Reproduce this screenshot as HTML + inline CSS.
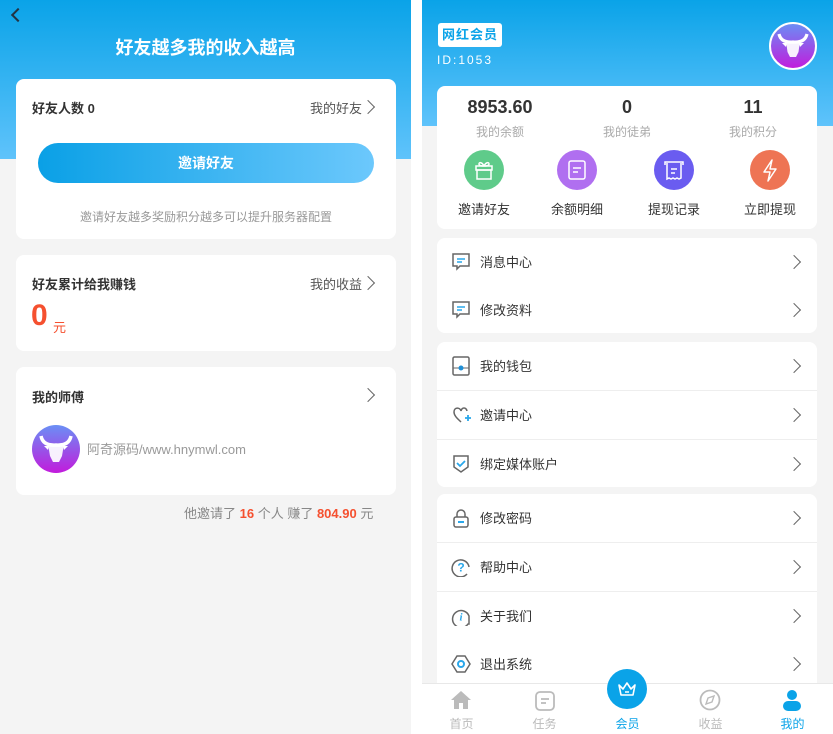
<!DOCTYPE html>
<html><head><meta charset="utf-8"><style>
*{margin:0;padding:0;box-sizing:border-box}
body{width:833px;height:734px;position:relative;background:#fff;font-family:"Liberation Sans","Noto Sans CJK SC",sans-serif;overflow:hidden;color:#333}
.a{position:absolute}
.card{position:absolute;background:#fff;border-radius:8px}
.chev{position:absolute;width:10px;height:10px;border-right:1.6px solid #666;border-top:1.6px solid #666;transform:rotate(45deg)}
.row{position:absolute;left:0;right:0;height:49px}
.row .t{position:absolute;left:43px;top:0;line-height:49px;font-size:13px;color:#333}
.row .ic{position:absolute;left:14px;top:14px}
.row .chev{right:18px;top:19px}
.sep{border-top:1px solid #eee}
.nav{position:absolute;top:683px;width:83px;text-align:center;font-size:12px;color:#bbb}
</style></head><body>
<!-- LEFT -->
<div class="a" style="left:0;top:0;width:411px;height:734px;background:#f4f4f4"></div>
<div class="a" style="left:0;top:0;width:411px;height:159px;background:linear-gradient(#0aa3e8,#5fc3fb)"></div>
<div class="a" style="left:13px;top:10px;width:10px;height:10px;border-left:2px solid #234;border-bottom:2px solid #234;transform:rotate(45deg)"></div>
<div class="a" style="left:0;width:411px;top:34px;text-align:center;color:#fff;font-size:18px;font-weight:bold">好友越多我的收入越高</div>
<div class="card" style="left:16px;top:79px;width:380px;height:160px">
 <div class="a" style="left:16px;top:19px;font-size:13px;font-weight:bold">好友人数 0</div>
 <div class="a" style="right:34px;top:19px;font-size:13px;color:#555">我的好友</div>
 <div class="chev" style="right:23px;top:23px"></div>
 <div class="a" style="left:22px;top:64px;width:336px;height:40px;border-radius:20px;background:linear-gradient(90deg,#0aa0e6,#6cc8fc);color:#fff;font-size:14px;font-weight:bold;text-align:center;line-height:40px">邀请好友</div>
 <div class="a" style="left:0;width:380px;top:129px;text-align:center;font-size:12px;color:#999">邀请好友越多奖励积分越多可以提升服务器配置</div>
</div>
<div class="card" style="left:16px;top:255px;width:380px;height:96px">
 <div class="a" style="left:16px;top:19px;font-size:13px;font-weight:bold">好友累计给我赚钱</div>
 <div class="a" style="right:34px;top:19px;font-size:13px;color:#555">我的收益</div>
 <div class="chev" style="right:23px;top:23px"></div>
 <div class="a" style="left:15px;top:44px;font-size:30px;font-weight:bold;color:#f5502f">0</div>
 <div class="a" style="left:37px;top:62px;font-size:13px;color:#f5502f">元</div>
</div>
<div class="card" style="left:16px;top:367px;width:380px;height:128px">
 <div class="a" style="left:16px;top:20px;font-size:13px;font-weight:bold">我的师傅</div>
 <div class="chev" style="right:23px;top:23px"></div>
 <svg class="a" style="left:16px;top:58px" width="48" height="48" viewBox="0 0 48 48"><defs><linearGradient id="g1" x1="0" y1="0" x2="0" y2="1"><stop offset="0" stop-color="#6a8ff5"/><stop offset="1" stop-color="#c21bdc"/></linearGradient></defs><circle cx="24" cy="24" r="24" fill="url(#g1)"/><path d="M9 11Q11 21 24 20Q37 21 39 11" fill="none" stroke="#fff" stroke-width="3.5"/><path d="M16 19L32 19L30 31L27 37H21L18 31Z" fill="#fff" opacity=".92"/><path d="M12 21l5 0-1 4zM36 21l-5 0 1 4z" fill="#fff"/></svg>
 <div class="a" style="left:71px;top:72px;font-size:13px;color:#999">阿奇源码/www.hnymwl.com</div>
</div>
<div class="a" style="left:184px;top:503px;font-size:13px;color:#888">他邀请了 <b style="color:#f5502f">16</b> 个人 赚了 <b style="color:#f5502f">804.90</b> 元</div>

<!-- RIGHT -->
<div class="a" style="left:422px;top:0;width:411px;height:734px;background:#f4f4f4"></div>
<div class="a" style="left:422px;top:0;width:411px;height:126px;background:linear-gradient(#0aa3e8,#5fc3fb)"></div>
<div class="a" style="left:438px;top:23px;width:64px;height:24px;background:#fff;border-radius:3px;color:#0aa3e8;font-size:13px;font-weight:bold;text-align:center;line-height:24px;letter-spacing:1px">网红会员</div>
<div class="a" style="left:437px;top:53px;color:#fff;font-size:12px;letter-spacing:2px">ID:1053</div>
<svg class="a" style="left:769px;top:22px" width="48" height="48" viewBox="0 0 48 48"><defs><linearGradient id="g2" x1="0" y1="0" x2="0" y2="1"><stop offset="0" stop-color="#6a8ff5"/><stop offset="1" stop-color="#c21bdc"/></linearGradient></defs><circle cx="24" cy="24" r="23" fill="url(#g2)" stroke="#fff" stroke-width="2"/><path d="M10 12Q12 21 24 20Q36 21 38 12" fill="none" stroke="#fff" stroke-width="3.2"/><path d="M17 19L31 19L29.5 30L27 35H21L18.5 30Z" fill="#fff" opacity=".92"/><path d="M13 21l5 0-1 4zM35 21l-5 0 1 4z" fill="#fff"/></svg>
<div class="card" style="left:437px;top:86px;width:380px;height:143px">
 <div class="a" style="left:13px;width:100px;top:11px;text-align:center;font-size:18px;font-weight:bold">8953.60</div>
 <div class="a" style="left:13px;width:100px;top:37px;text-align:center;font-size:12px;color:#aaa">我的余额</div>
 <div class="a" style="left:140px;width:100px;top:11px;text-align:center;font-size:18px;font-weight:bold">0</div>
 <div class="a" style="left:140px;width:100px;top:37px;text-align:center;font-size:12px;color:#aaa">我的徒弟</div>
 <div class="a" style="left:266px;width:100px;top:11px;text-align:center;font-size:18px;font-weight:bold">11</div>
 <div class="a" style="left:266px;width:100px;top:37px;text-align:center;font-size:12px;color:#aaa">我的积分</div>
 <svg class="a" style="left:27px;top:64px" width="40" height="40"><circle cx="20" cy="20" r="20" fill="#5fcb8a"/><g fill="none" stroke="#fff" stroke-width="1.5"><rect x="12" y="16" width="16" height="4"/><rect x="13" y="20" width="14" height="9"/><path d="M20 16c-2-4-5-4-5-2s3 2 5 2c2 0 5 0 5-2s-3-2-5 2"/></g></svg>
 <div class="a" style="left:7px;width:80px;top:113px;text-align:center;font-size:13px">邀请好友</div>
 <svg class="a" style="left:120px;top:64px" width="40" height="40"><circle cx="20" cy="20" r="20" fill="#b06ff0"/><g fill="none" stroke="#fff" stroke-width="1.5"><rect x="12" y="11" width="16" height="18" rx="2"/><path d="M16 18h8M16 22h5"/></g></svg>
 <div class="a" style="left:100px;width:80px;top:113px;text-align:center;font-size:13px">余额明细</div>
 <svg class="a" style="left:217px;top:64px" width="40" height="40"><circle cx="20" cy="20" r="20" fill="#6a5cf0"/><g fill="none" stroke="#fff" stroke-width="1.5"><path d="M11 15v-3h18v3M13 13v16l2-1 2 1 2-1 2 1 2-1 2 1 2-1V13"/><path d="M17 19h6M17 23h4"/></g></svg>
 <div class="a" style="left:197px;width:80px;top:113px;text-align:center;font-size:13px">提现记录</div>
 <svg class="a" style="left:313px;top:64px" width="40" height="40"><circle cx="20" cy="20" r="20" fill="#ee7454"/><path d="M22 10l-8 12h6l-2 9 8-12h-6z" fill="none" stroke="#fff" stroke-width="1.5" stroke-linejoin="round"/></svg>
 <div class="a" style="left:293px;width:80px;top:113px;text-align:center;font-size:13px">立即提现</div>
</div>
<div class="card" style="left:437px;top:238px;width:380px;height:95px">
 <div class="row" style="top:0"><svg class="ic" width="20" height="20"><path d="M2 2h16v12H9l-3 3v-3H2z" fill="none" stroke="#666" stroke-width="1.5"/><path d="M6 7h8M6 10h5" stroke="#2aa7ea" stroke-width="1.5"/></svg><span class="t">消息中心</span><i class="chev"></i></div>
 <div class="row" style="top:48px"><svg class="ic" width="20" height="20"><path d="M2 2h16v12H9l-3 3v-3H2z" fill="none" stroke="#666" stroke-width="1.5"/><path d="M6 7h8M6 10h5" stroke="#2aa7ea" stroke-width="1.5"/></svg><span class="t">修改资料</span><i class="chev"></i></div>
</div>
<div class="card" style="left:437px;top:342px;width:380px;height:145px">
 <div class="row" style="top:0"><svg class="ic" width="20" height="20"><rect x="2" y="1" width="16" height="18" rx="1.5" fill="none" stroke="#666" stroke-width="1.5"/><path d="M2 12h16" stroke="#666"/><circle cx="10" cy="12" r="2.5" fill="#1f8fd6"/></svg><span class="t">我的钱包</span><i class="chev"></i></div>
 <div class="row sep" style="top:48px"><svg class="ic" width="20" height="20"><path d="M16 6c-1-4-5-4-6 0c-1-4-7-4-7 1c0 4 4 7 7 10" fill="none" stroke="#666" stroke-width="1.5"/><path d="M14 13h6M17 10v6" stroke="#2aa7ea" stroke-width="1.8"/></svg><span class="t">邀请中心</span><i class="chev"></i></div>
 <div class="row sep" style="top:97px"><svg class="ic" width="20" height="20"><path d="M3 2h14v11l-7 5-7-5z" fill="none" stroke="#666" stroke-width="1.5"/><path d="M6 9l3 3 5-5" fill="none" stroke="#2aa7ea" stroke-width="1.8"/></svg><span class="t">绑定媒体账户</span><i class="chev"></i></div>
</div>
<div class="card" style="left:437px;top:494px;width:380px;height:200px">
 <div class="row" style="top:0"><svg class="ic" width="20" height="20"><path d="M6 9V6a4 4 0 018 0v3" fill="none" stroke="#666" stroke-width="1.5"/><rect x="3" y="9" width="14" height="10" rx="2" fill="none" stroke="#666" stroke-width="1.5"/><path d="M7 14h6" stroke="#2aa7ea" stroke-width="2"/></svg><span class="t">修改密码</span><i class="chev"></i></div>
 <div class="row sep" style="top:48px"><svg class="ic" width="20" height="20"><path d="M16 17A8.5 8.5 0 1118 10" fill="none" stroke="#666" stroke-width="1.5"/><text x="10" y="14.5" font-size="12" font-weight="bold" fill="#2aa7ea" text-anchor="middle" font-family="Liberation Sans">?</text></svg><span class="t">帮助中心</span><i class="chev"></i></div>
 <div class="row sep" style="top:97px"><svg class="ic" width="20" height="20"><path d="M17 18A8.5 8.5 0 1118 10v8z" fill="none" stroke="#666" stroke-width="1.5"/><text x="10" y="14.5" font-size="11" font-weight="bold" font-style="italic" fill="#2aa7ea" text-anchor="middle" font-family="Liberation Serif">i</text></svg><span class="t">关于我们</span><i class="chev"></i></div>
 <div class="row" style="top:146px"><svg class="ic" width="20" height="20"><path d="M6 2h8l5 8-5 8H6l-5-8z" fill="none" stroke="#666" stroke-width="1.5"/><circle cx="10" cy="10" r="3" fill="none" stroke="#2aa7ea" stroke-width="2"/></svg><span class="t">退出系统</span><i class="chev"></i></div>
</div>
<div class="a" style="left:422px;top:683px;width:411px;height:51px;background:#fff;border-top:1px solid #e8e8e8"></div>
<div class="a" style="left:607px;top:669px;width:40px;height:40px;border-radius:50%;background:#0aa3e8"></div>
<svg class="a" style="left:615px;top:677px" width="24" height="24"><path d="M4 8l4 4 4-6 4 6 4-4-2 10H6z" fill="none" stroke="#fff" stroke-width="1.6" stroke-linejoin="round"/><path d="M10 15h4" stroke="#fff" stroke-width="1.5"/></svg>
<svg class="a" style="left:450px;top:690px" width="22" height="20"><path d="M11 1L1 10h3v9h5v-6h4v6h5v-9h3z" fill="#bbb"/></svg>
<svg class="a" style="left:534px;top:690px" width="22" height="22"><rect x="2" y="2" width="18" height="18" rx="4" fill="none" stroke="#bbb" stroke-width="1.8"/><path d="M7 9h8M7 13h5" stroke="#bbb" stroke-width="1.8"/></svg>
<svg class="a" style="left:699px;top:689px" width="22" height="22"><circle cx="11" cy="11" r="9.5" fill="none" stroke="#bbb" stroke-width="1.8"/><path d="M15 7l-2 6-6 2 2-6z" fill="none" stroke="#bbb" stroke-width="1.4"/></svg>
<svg class="a" style="left:781px;top:689px" width="22" height="22"><circle cx="11" cy="6" r="5" fill="#0aa3e8"/><rect x="2" y="12" width="18" height="10" rx="5" fill="#0aa3e8"/></svg>
<div class="nav" style="left:420px;top:715px">首页</div>
<div class="nav" style="left:503px;top:715px">任务</div>
<div class="nav" style="left:586px;top:715px;color:#0aa3e8">会员</div>
<div class="nav" style="left:669px;top:715px">收益</div>
<div class="nav" style="left:751px;top:715px;color:#0aa3e8">我的</div>
</body></html>
